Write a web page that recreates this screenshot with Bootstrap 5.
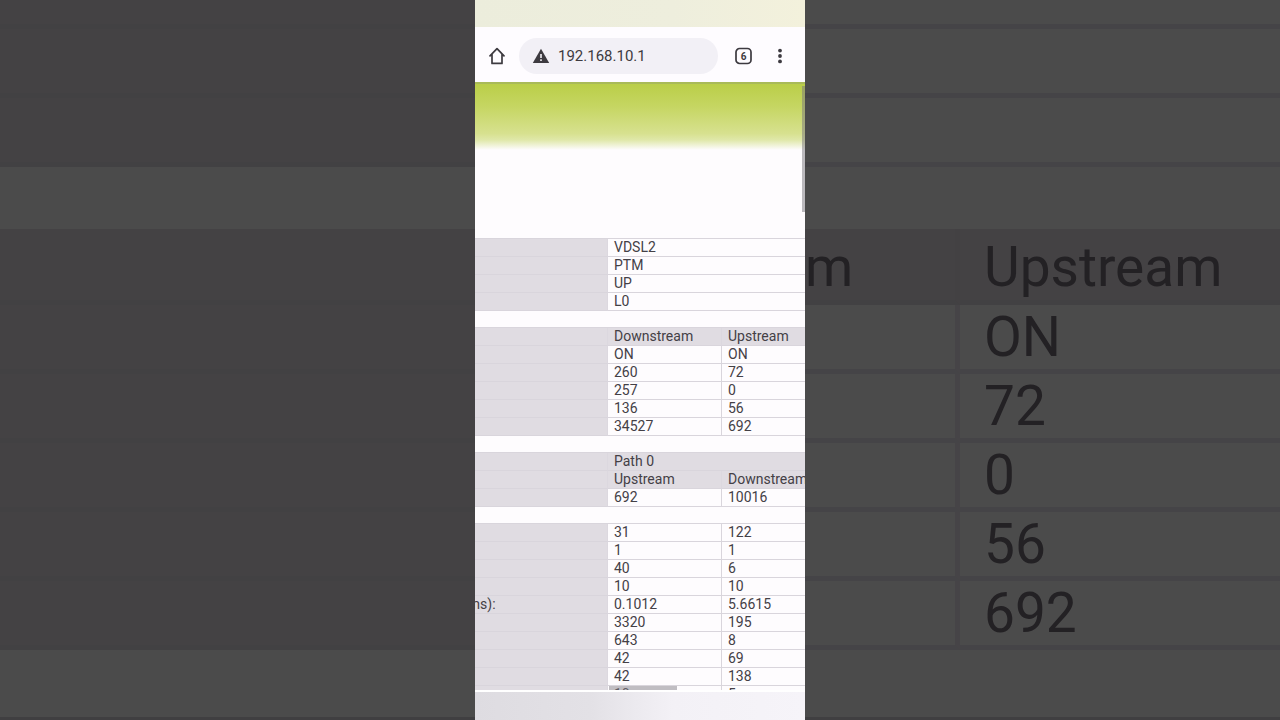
<!DOCTYPE html>
<html lang="en">
<head>
<meta charset="utf-8">
<meta name="viewport" content="width=device-width, initial-scale=1">
<title>192.168.10.1</title>
<link href="https://cdn.jsdelivr.net/npm/bootstrap@5.3.0/dist/css/bootstrap.min.css" rel="stylesheet">
<style>
  body { font-family: Roboto, "Liberation Sans", sans-serif; color: #444046; background: #4b4b4b; }
  .stage { display: grid; grid-template-columns: minmax(0, 475fr) minmax(330px, 330fr) minmax(0, 475fr); }
  table { border-collapse: separate; border-spacing: 0; table-layout: fixed; width: 100%; white-space: nowrap; }
  th { font-weight: 400; text-align: left; }

  /* dimmed, enlarged copy of the tables on both sides */
  .backdrop { background: #4b4b4b; color: #232124; font-size: 55px; line-height: 62px; }
  .backdrop tr { height: 69px; }
  .backdrop tr.cut { height: 29px; }
  .backdrop tr.heading { height: 76px; }
  .backdrop td, .backdrop th { padding: 0 0 0 24px; border-bottom: 5px solid #454447; }
  .backdrop .names td { background: #444244; border-color: #424143; }
  .backdrop .values td:first-child { border-right: 5px solid #464447; }
  .backdrop .heading th { background: #444244; padding-top: 4px; border-color: #424143; }
  .backdrop .heading th:first-child { padding: 4px 106px 0 0; border-right: 5px solid #434143; text-align: right; }
  .col-first { width: 155px; }
  .after-top { margin-bottom: 62px; }
  .footline { background: #403f41; margin-top: 67px; }

  /* phone */
  .phone { background: #fefcfe; }
  .statusbar { height: 27px; background: linear-gradient(90deg, #eceddc, #eeeedd 60%, #f3f1dc); }
  .toolbar { height: 55px; padding: 3px 21px 0 14px; background: #fefcff; }
  .toolbar button { color: #3d3a40; line-height: 1; }
  .address { height: 36px; background: #f2f0f6; padding-left: 13px; margin: 0 17px 0 14px; color: #3d3a40; }
  .address input { color: #3d3a40; font-size: 15px; line-height: 20px; outline: 0; }
  .banner { height: 68px; border-top: 2px solid #a9ba58; margin-bottom: 88px;
    background: linear-gradient(#bace48, #c6d663 35%, #d7e18f 75%, #e0e8aa 85%, #fefcfe); }
  .readings { margin-left: -24px; font-size: 14px; line-height: 17px; }
  .readings table { margin-bottom: 16px; border-top: 1px solid #d9d5dc; }
  .readings tr { height: 18px; }
  .readings td, .readings th { padding: 0 0 0 6px; border-bottom: 1px solid #d9d5dc; border-right: 1px solid #d9d5dc; }
  .readings td:last-child, .readings th:last-child { border-right: 0; }
  .readings th { background: #e0dce2; border-right-color: #dcd8df; }
  .readings th.unit { padding-left: 12px; }
  .col-name { width: 157px; }
  .col-value { width: 114px; }
  .thumb-y { top: 4px; right: 0; width: 3px; height: 126px; background: rgba(120, 118, 124, .5); }
  .thumb-x { bottom: 0; left: 134px; width: 68px; height: 4px; background: rgba(130, 126, 134, .5); }
  .navbar-strip { height: 30px; border-top: 2px solid #fff; background: linear-gradient(90deg, #dedce1, #e3e1e6 35%, #f3f1f6 60%, #f6f4f9); }
</style>
</head>
<body>
<div class="stage vh-100 overflow-hidden">

  <div class="backdrop overflow-hidden d-flex flex-column" aria-hidden="true">
    <table class="names after-top"><tbody>
      <tr class="cut"><td></td></tr><tr><td></td></tr><tr><td></td></tr>
    </tbody></table>
    <table class="names"><tbody>
      <tr class="heading"><td></td></tr><tr><td></td></tr><tr><td></td></tr><tr><td></td></tr><tr><td></td></tr><tr><td></td></tr>
    </tbody></table>
    <div class="footline flex-grow-1"></div>
  </div>

  <main class="phone d-flex flex-column overflow-hidden">
    <div class="statusbar flex-shrink-0"></div>
    <header class="toolbar d-flex align-items-center flex-shrink-0">
      <button type="button" class="btn p-0 border-0 d-flex" aria-label="Home">
        <svg width="16" height="18" viewBox="0 0 16 18" fill="none" stroke="currentColor" stroke-width="1.7" stroke-linejoin="round" stroke-linecap="round"><path d="M1 8.8 8 1.6l7 7.2M3 7.2v9.2h10V7.2"/></svg>
      </button>
      <form class="address rounded-pill d-flex align-items-center flex-grow-1">
        <svg class="flex-shrink-0" width="18" height="16" viewBox="0 0 18 16" aria-hidden="true"><path fill="currentColor" d="M9 .8 17.2 15H.8z"/><path fill="#f2f0f6" d="M8.2 6h1.6v4H8.2zM8.2 11.2h1.6v1.7H8.2z"/></svg>
        <input class="border-0 bg-transparent p-0 ms-2 w-100" type="text" aria-label="Address" value="192.168.10.1">
      </form>
      <button type="button" class="btn p-0 border-0 d-flex" aria-label="6 open tabs">
        <svg width="17" height="18" viewBox="0 0 17 18"><rect x="1" y="1.5" width="15" height="15" rx="3.6" fill="none" stroke="currentColor" stroke-width="1.7"/><text x="8.5" y="12.6" text-anchor="middle" font-size="10" font-weight="700" fill="currentColor">6</text></svg>
      </button>
      <button type="button" class="btn p-0 border-0 d-flex ms-4" aria-label="Menu">
        <svg width="8" height="18" viewBox="0 0 8 18" fill="currentColor"><circle cx="4" cy="3.6" r="1.9"/><circle cx="4" cy="9" r="1.9"/><circle cx="4" cy="14.4" r="1.9"/></svg>
      </button>
    </header>

    <section class="position-relative overflow-hidden flex-grow-1">
      <div class="banner"></div>
      <div class="readings">
        <table>
          <colgroup><col class="col-name"><col></colgroup>
          <tbody>
            <tr><th></th><td>VDSL2</td></tr>
            <tr><th></th><td>PTM</td></tr>
            <tr><th></th><td>UP</td></tr>
            <tr><th></th><td>L0</td></tr>
          </tbody>
        </table>
        <table>
          <colgroup><col class="col-name"><col class="col-value"><col></colgroup>
          <thead><tr><th></th><th>Downstream</th><th>Upstream</th></tr></thead>
          <tbody>
            <tr><th></th><td>ON</td><td>ON</td></tr>
            <tr><th></th><td>260</td><td>72</td></tr>
            <tr><th></th><td>257</td><td>0</td></tr>
            <tr><th></th><td>136</td><td>56</td></tr>
            <tr><th></th><td>34527</td><td>692</td></tr>
          </tbody>
        </table>
        <table>
          <colgroup><col class="col-name"><col class="col-value"><col></colgroup>
          <thead>
            <tr><th></th><th colspan="2">Path 0</th></tr>
            <tr><th></th><th>Upstream</th><th>Downstream</th></tr>
          </thead>
          <tbody><tr><th></th><td>692</td><td>10016</td></tr></tbody>
        </table>
        <table>
          <colgroup><col class="col-name"><col class="col-value"><col></colgroup>
          <tbody>
            <tr><th></th><td>31</td><td>122</td></tr>
            <tr><th></th><td>1</td><td>1</td></tr>
            <tr><th></th><td>40</td><td>6</td></tr>
            <tr><th></th><td>10</td><td>10</td></tr>
            <tr><th class="unit">(ms):</th><td>0.1012</td><td>5.6615</td></tr>
            <tr><th></th><td>3320</td><td>195</td></tr>
            <tr><th></th><td>643</td><td>8</td></tr>
            <tr><th></th><td>42</td><td>69</td></tr>
            <tr><th></th><td>42</td><td>138</td></tr>
            <tr><th></th><td>10</td><td>5</td></tr>
          </tbody>
        </table>
      </div>
      <div class="thumb-y position-absolute"></div>
      <div class="thumb-x position-absolute"></div>
    </section>
    <div class="navbar-strip flex-shrink-0"></div>
  </main>

  <div class="backdrop overflow-hidden d-flex flex-column" aria-hidden="true">
    <table class="after-top"><tbody>
      <tr class="cut"><td></td></tr><tr><td></td></tr><tr><td></td></tr>
    </tbody></table>
    <table class="values">
      <colgroup><col class="col-first"><col></colgroup>
      <thead><tr class="heading"><th>m</th><th>Upstream</th></tr></thead>
      <tbody>
        <tr><td></td><td>ON</td></tr>
        <tr><td></td><td>72</td></tr>
        <tr><td></td><td>0</td></tr>
        <tr><td></td><td>56</td></tr>
        <tr><td></td><td>692</td></tr>
      </tbody>
    </table>
    <div class="footline flex-grow-1"></div>
  </div>
</div>
<script src="https://cdn.jsdelivr.net/npm/bootstrap@5.3.0/dist/js/bootstrap.bundle.min.js"></script>
</body>
</html>
